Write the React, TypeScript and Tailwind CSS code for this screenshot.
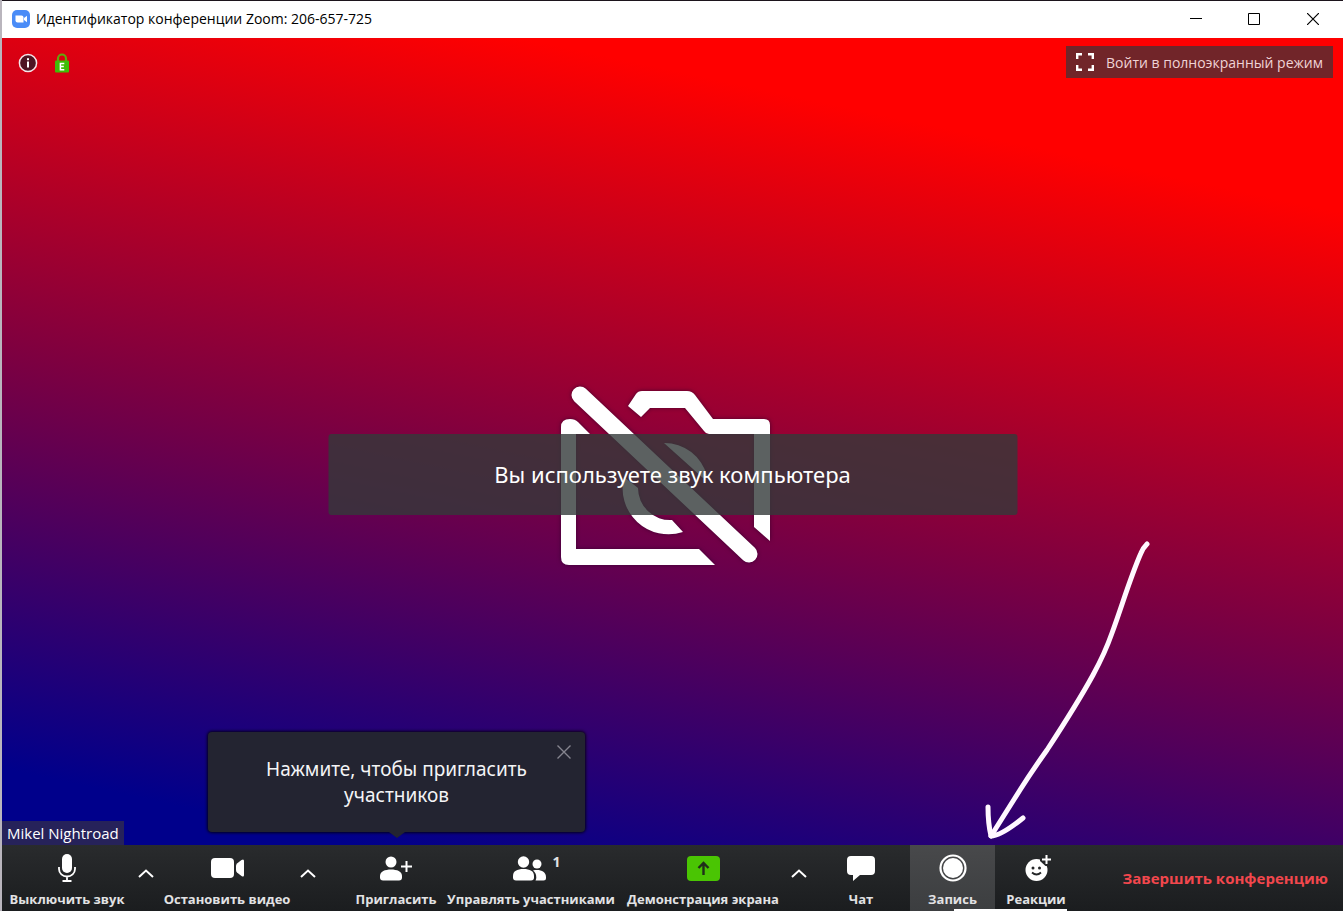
import React from 'react';

// =================================================================================================
// Types
// =================================================================================================

interface ToolButtonProps {
  label: string;
  className: string;
  children: React.ReactNode;
}

// =================================================================================================
// Icons
// =================================================================================================

const ZoomLogo: React.FC = () => (
  <svg width="18" height="18" viewBox="0 0 18 18" aria-hidden="true">
    <rect width="18" height="18" rx="5" fill="#4a8cf7" />
    <path d="M3.5 5.5h6a2 2 0 0 1 2 2v5h-6a2 2 0 0 1-2-2z" fill="#fff" />
    <path d="M12 8l3-2.3v6.6L12 10z" fill="#fff" />
  </svg>
);

const InfoIcon: React.FC = () => (
  <svg width="20" height="20" viewBox="0 0 20 20" aria-hidden="true">
    <circle cx="10" cy="10" r="8.6" fill="#4f1423" stroke="#f5e6ea" strokeWidth="1.5" />
    <rect x="9" y="8.5" width="2" height="6" fill="#fff" />
    <rect x="9" y="5.2" width="2" height="2" fill="#fff" />
  </svg>
);

const LockIcon: React.FC = () => (
  <svg width="14" height="20" viewBox="0 0 14 20" aria-hidden="true">
    <path d="M3 9V5.5a4 4 0 0 1 8 0V9" fill="none" stroke="#62a80c" strokeWidth="2.2" />
    <rect y="7.5" width="14" height="12" rx="1" fill="#3fbd07" />
    <path d="M9.3 10.4H5.4v6.4h3.9M5.4 13.6h3.4" fill="none" stroke="#fff" strokeWidth="1.5" />
  </svg>
);

const FullscreenIcon: React.FC = () => (
  <svg width="18" height="18" viewBox="0 0 18 18" fill="none" stroke="#fff" strokeWidth="2.4" aria-hidden="true">
    <path d="M1.2 6V1.2H6M12 1.2h4.8V6M16.8 12v4.8H12M6 16.8H1.2V12" />
  </svg>
);

const CameraOffIcon: React.FC = () => (
  <svg
    className="absolute left-[559px] top-[342px] drop-shadow-[0_0_2px_rgba(40,0,40,0.7)]"
    width="215"
    height="190"
    viewBox="561 380 215 190"
    fill="#fff"
    aria-hidden="true"
  >
    <path d="M580 395L749 554" fill="none" stroke="#fff" strokeWidth="17" strokeLinecap="round" />
    <path d="M561 427Q561 419 570 419Q575 419 578 422L590 434L576 434L576 549L699 549L715 565L569 565Q561 565 561 557Z" />
    <path d="M628 406L636 394Q638 391 642 391L687 391Q692 391 695 395L713 419L764 419Q770 419 770 425L770 541L754 527L754 434L709 434Q706 434 704 431L685 408L650 408L641 417Z" />
    <path d="M664 443A44 44 0 0 1 707 476L703 478Z" />
    <path d="M624 477A46 46 0 0 0 683 532L672 520A32 32 0 0 1 638 488Z" />
  </svg>
);

const HandDrawnArrow: React.FC = () => (
  <svg
    className="absolute bottom-1 right-[188px]"
    width="170"
    height="300"
    viewBox="985 541 170 300"
    fill="none"
    stroke="#fff8ff"
    strokeWidth="5"
    strokeLinecap="round"
    strokeLinejoin="round"
    aria-hidden="true"
  >
    <path d="M1147 544Q1143 548 1141 553C1130 578 1122 606 1112 633Q1105 653 1093 675C1081 697 1062 727 1047 750Q1032 771 1020 790L991 836" />
    <path d="M988 807Q988 823 991 836Q1001 836 1023 818" />
  </svg>
);

const MicIcon: React.FC = () => (
  <svg width="18" height="28" viewBox="0 0 18 28" aria-hidden="true">
    <rect x="4" width="10" height="19" rx="5" fill="#fff" />
    <path d="M1 13v2a8 7.5 0 0 0 16 0v-2M9 22.5V27M4.5 27h9" fill="none" stroke="#fff" strokeWidth="1.8" />
  </svg>
);

const VideoIcon: React.FC = () => (
  <svg width="33" height="20" viewBox="0 0 33 20" fill="#fff" aria-hidden="true">
    <rect width="23" height="20" rx="4" />
    <path d="M25 8q0-1.5 1-2.5l4.500-3.500q2.500-1.500 2.500 1v14q0 2.500-2.500 1l-4.500-3.500q-1-1-1-2.500z" />
  </svg>
);

const CaretIcon: React.FC = () => (
  <svg width="16" height="9" viewBox="0 0 16 9" fill="none" stroke="#fff" strokeWidth="2" aria-hidden="true">
    <path d="M1 8l7-6.5L15 8" />
  </svg>
);

const InviteIcon: React.FC = () => (
  <svg width="32" height="25" viewBox="0 0 32 25" fill="#fff" aria-hidden="true">
    <circle cx="11" cy="6" r="5.5" />
    <path d="M0 20c0-4.5 5-6.5 11-6.5s11 2 11 6.5v1.5q0 3-3 3H3q-3 0-3-3z" />
    <path d="M21 10.5h11M26.5 5v11" stroke="#fff" strokeWidth="2" />
  </svg>
);

const ParticipantsIcon: React.FC = () => (
  <svg width="33" height="25" viewBox="0 0 33 25" fill="#fff" aria-hidden="true">
    <circle cx="10.5" cy="6" r="5.7" />
    <path d="M0 20c0-5 4-7 10.5-7S21 15 21 20v1.5q0 3-3 3H3q-3 0-3-3z" />
    <circle cx="24" cy="8" r="4.5" />
    <path d="M20 14.5c7-1.5 13 1 13 6.5v1q0 2.5-2.5 2.5h-8q.8-1.5.8-3C23.3 18 22 15.8 20 14.5z" />
  </svg>
);

const ShareIcon: React.FC = () => (
  <svg width="33" height="25" viewBox="0 0 33 25" aria-hidden="true">
    <rect width="33" height="25" rx="4" fill="#4ac503" />
    <path d="M16.5 19V7.5M11.5 12l5-5 5 5" fill="none" stroke="#20301a" strokeWidth="2.4" />
  </svg>
);

const ChatIcon: React.FC = () => (
  <svg width="28" height="26" viewBox="0 0 28 26" fill="#fff" aria-hidden="true">
    <path d="M4 1h20q4 0 4 4v11q0 4-4 4H13l-7 6V20H4q-4 0-4-4V5q0-4 4-4z" />
  </svg>
);

const RecordIcon: React.FC = () => (
  <svg width="28" height="28" viewBox="0 0 28 28" fill="none" stroke="#fff" aria-hidden="true">
    <circle cx="14" cy="14" r="12.5" strokeWidth="2.2" />
    <circle cx="14" cy="14" r="10" fill="#fff" stroke="none" />
  </svg>
);

const ReactionsIcon: React.FC = () => (
  <svg className="ml-1" width="26" height="27" viewBox="0 0 26 27" aria-hidden="true">
    <circle cx="11.5" cy="15" r="11" fill="#fff" />
    <path d="M15 0h11v11h-5.5L15 6z" fill="#242628" />
    <path d="M17 4.5h9M21.5 0v9" stroke="#fff" strokeWidth="2" />
    <circle cx="8" cy="13" r="1.5" fill="#242628" />
    <circle cx="14.5" cy="13" r="1.5" fill="#242628" />
    <path d="M7 17.5q4.5 4 9 0" fill="none" stroke="#242628" strokeWidth="1.8" />
  </svg>
);

// =================================================================================================
// Components
// =================================================================================================

const ToolButton: React.FC<ToolButtonProps> = ({ label, className, children }) => (
  <button type="button" className={`flex shrink-0 flex-col items-center ${className}`}>
    <span className="flex h-[46px] items-center">{children}</span>
    <span className="whitespace-nowrap text-[13px] leading-4 font-bold text-[#e2e2e4]">{label}</span>
  </button>
);

const CaretButton: React.FC<{ label: string }> = ({ label }) => (
  <button type="button" aria-label={label} className="flex w-7 shrink-0 justify-center pt-6">
    <CaretIcon />
  </button>
);

const TitleBar: React.FC = () => (
  <header className="flex h-[38px] items-center border-t border-[#1c141c] bg-white pl-[10px] pb-0.5 text-black">
    <ZoomLogo />
    <h1 className="ml-[6px] text-[14px] leading-5">Идентификатор конференции Zoom: 206-657-725</h1>
    <div className="ml-auto flex self-stretch">
      <button type="button" aria-label="Свернуть" className="flex w-[58px] items-center justify-center">
        <svg width="12" height="12" viewBox="0 0 12 12" stroke="#000"><path d="M0 5.5h12" /></svg>
      </button>
      <button type="button" aria-label="Развернуть" className="flex w-[58px] items-center justify-center">
        <svg width="12" height="12" viewBox="0 0 12 12" stroke="#000" fill="none"><path d="M.5 .5h11v11H.5z" /></svg>
      </button>
      <button type="button" aria-label="Закрыть" className="flex w-[60px] items-center justify-center">
        <svg width="12" height="12" viewBox="0 0 12 12" stroke="#000" strokeWidth="1.2"><path d="M0 0l12 12M12 0L0 12" /></svg>
      </button>
    </div>
  </header>
);

const InviteTip: React.FC = () => (
  <div className="absolute bottom-[13px] left-[206px] w-[377px] rounded bg-[#232431] px-10 py-6 shadow-[0_0_3px_1px_rgba(0,0,0,0.8)]">
    <p className="text-center font-['Noto_Sans',sans-serif] text-[19px] leading-[26px] text-[#f4f4f6]">
      Нажмите, чтобы пригласить
      <br />
      участников
    </p>
    <button type="button" aria-label="Закрыть подсказку" className="absolute right-[14px] top-[13px]">
      <svg width="14" height="14" viewBox="0 0 14 14" stroke="#85858f" strokeWidth="1.4"><path d="M.5 .5l13 13M13.5 .5l-13 13" /></svg>
    </button>
    <svg className="absolute left-[181px] top-full" width="16" height="6" viewBox="0 0 16 6" fill="#232431" aria-hidden="true">
      <path d="M0 0h16L8 6z" />
    </svg>
  </div>
);

const VideoArea: React.FC = () => (
  <main className="relative flex-1 bg-[linear-gradient(192deg,#ff0000_16%,#80003f_54%,#00008b_93%)]">
    <div className="flex items-start justify-between pl-4 pr-[10px] pt-2">
      <div className="flex items-center gap-[17px] pt-[7px]">
        <button type="button" aria-label="Сведения о конференции"><InfoIcon /></button>
        <LockIcon />
      </div>
      <button type="button" className="flex h-8 items-center gap-3 bg-[#712529] px-[10px] text-[14px] text-[#efd3d6]">
        <FullscreenIcon />
        Войти в полноэкранный режим
      </button>
    </div>
    <CameraOffIcon />
    <p className="absolute left-1/2 top-[396px] w-[689px] -translate-x-1/2 rounded-[3px] bg-[#333a3a]/80 py-6 text-center font-['Noto_Sans',sans-serif] text-[22px] leading-[33px] text-white">
      Вы используете звук компьютера
    </p>
    <HandDrawnArrow />
    <InviteTip />
    <div className="absolute bottom-0 left-0 bg-[#26225a] px-[5px] text-[15px] leading-6 text-white">Mikel Nightroad</div>
  </main>
);

const Toolbar: React.FC = () => (
  <footer className="relative flex h-[66px] bg-linear-to-b from-[#292b2d] to-[#1b1d1f]">
    <ToolButton label="Выключить звук" className="w-[130px]"><MicIcon /></ToolButton>
    <CaretButton label="Параметры звука" />
    <ToolButton label="Остановить видео" className="w-[134px]"><VideoIcon /></ToolButton>
    <CaretButton label="Параметры видео" />
    <ToolButton label="Пригласить" className="ml-[29px] w-[90px]"><InviteIcon /></ToolButton>
    <ToolButton label="Управлять участниками" className="w-[180px]">
      <span className="relative mr-1">
        <ParticipantsIcon />
        <span className="absolute -top-1 left-10 text-[14px] leading-5 font-bold text-[#e2e2e4]">1</span>
      </span>
    </ToolButton>
    <ToolButton label="Демонстрация экрана" className="w-[164px]"><ShareIcon /></ToolButton>
    <CaretButton label="Параметры демонстрации" />
    <ToolButton label="Чат" className="ml-[6px] w-[84px]"><ChatIcon /></ToolButton>
    <ToolButton label="Запись" className="ml-[7px] w-[85px] bg-linear-to-b from-[#48494b] to-[#3c3e40]"><RecordIcon /></ToolButton>
    <ToolButton label="Реакции" className="w-[82px]"><ReactionsIcon /></ToolButton>
    <button type="button" className="ml-auto pr-[15px] text-[15px] font-bold whitespace-nowrap text-[#f2474d]">
      Завершить конференцию
    </button>
    <div className="absolute bottom-0 left-[952px] h-[2px] w-[113px] bg-white" />
  </footer>
);

// =================================================================================================
// Export
// =================================================================================================

const App: React.FC = () => (
  <div className="flex min-h-screen flex-col border-l-2 border-[#b9b5bd] font-['Open_Sans','Noto_Sans',sans-serif]">
    <TitleBar />
    <VideoArea />
    <Toolbar />
  </div>
);

export default App;
